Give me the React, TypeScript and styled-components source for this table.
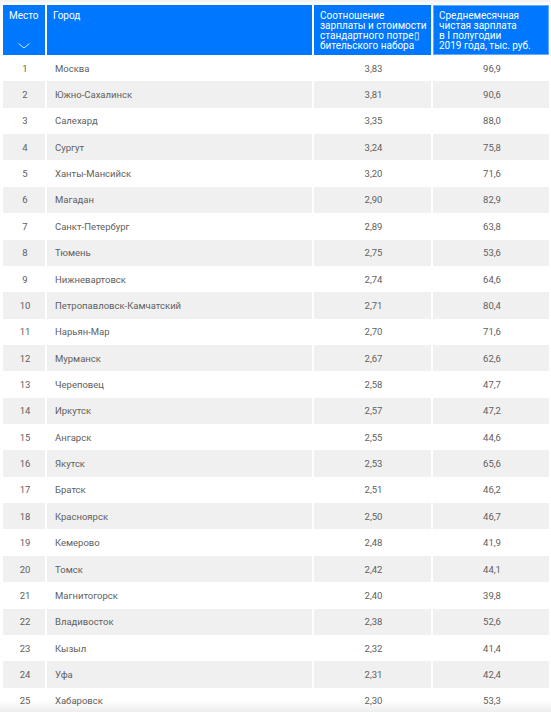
import styled, { createGlobalStyle } from 'styled-components';

const GlobalStyle = createGlobalStyle`
  html, body {
    margin: 0;
    padding: 0;
    background: #fff;
    overflow: hidden;
  }
  body {
    font-family: Roboto, "Open Sans", "Liberation Sans", sans-serif;
  }
`;

const Frame = styled.div`
  position: relative;
  width: 551px;
  height: 712px;
  overflow: hidden;
  padding: 5px 0 0 1px;
  box-sizing: border-box;
`;

const Shade = styled.div<{ $edge: 'top' | 'bottom' }>`
  position: absolute;
  left: 0;
  right: 0;
  ${({ $edge }) => ($edge === 'top' ? 'top: 0; height: 5px;' : 'bottom: 0; height: 12px;')}
  background: ${({ $edge }) =>
    $edge === 'top'
      ? 'linear-gradient(to bottom, rgba(0,0,0,0.06), rgba(0,0,0,0))'
      : 'linear-gradient(to bottom, rgba(0,0,0,0), rgba(0,0,0,0.07))'};
  pointer-events: none;
`;

const Table = styled.table`
  width: 550px;
  border-collapse: separate;
  border-spacing: 2px 0;
  table-layout: fixed;
`;

const HeadCell = styled.th<{ $active?: boolean }>`
  height: 50px;
  padding: 6px 4px 0 6px;
  box-sizing: border-box;
  background: #0077ff;
  color: #fff;
  font-size: 10px;
  font-weight: 400;
  line-height: 10px;
  text-align: left;
  vertical-align: top;
  white-space: nowrap;
  overflow: hidden;
  position: relative;
  ${({ $active }) => ($active ? 'box-shadow: inset 0 0 0 1px rgba(160, 205, 255, 0.6);' : '')}
`;

const Chevron = styled.svg`
  position: absolute;
  left: 50%;
  bottom: 6px;
  margin-left: -6px;
`;

const Row = styled.tr<{ $shaded: boolean }>`
  td {
    background: ${({ $shaded }) => ($shaded ? '#f0f0f0' : '#fff')};
  }
`;

const Cell = styled.td<{ $align?: 'left' | 'center' }>`
  height: 26.36px;
  padding: 0 6px 0 8px;
  box-sizing: border-box;
  color: #606060;
  font-size: 9.5px;
  text-align: ${({ $align }) => $align || 'center'};
  vertical-align: middle;
  white-space: nowrap;
`;

const rows: [string, string, string][] = [
  ['Москва', '3,83', '96,9'],
  ['Южно-Сахалинск', '3,81', '90,6'],
  ['Салехард', '3,35', '88,0'],
  ['Сургут', '3,24', '75,8'],
  ['Ханты-Мансийск', '3,20', '71,6'],
  ['Магадан', '2,90', '82,9'],
  ['Санкт-Петербург', '2,89', '63,8'],
  ['Тюмень', '2,75', '53,6'],
  ['Нижневартовск', '2,74', '64,6'],
  ['Петропавловск-Камчатский', '2,71', '80,4'],
  ['Нарьян-Мар', '2,70', '71,6'],
  ['Мурманск', '2,67', '62,6'],
  ['Череповец', '2,58', '47,7'],
  ['Иркутск', '2,57', '47,2'],
  ['Ангарск', '2,55', '44,6'],
  ['Якутск', '2,53', '65,6'],
  ['Братск', '2,51', '46,2'],
  ['Красноярск', '2,50', '46,7'],
  ['Кемерово', '2,48', '41,9'],
  ['Томск', '2,42', '44,1'],
  ['Магнитогорск', '2,40', '39,8'],
  ['Владивосток', '2,38', '52,6'],
  ['Кызыл', '2,32', '41,4'],
  ['Уфа', '2,31', '42,4'],
  ['Хабаровск', '2,30', '53,3'],
];

export default function App() {
  return (
    <Frame>
      <GlobalStyle />
      <Table>
        <colgroup>
          <col style={{ width: 42 }} />
          <col style={{ width: 265 }} />
          <col style={{ width: 117 }} />
          <col style={{ width: 116 }} />
        </colgroup>
        <thead>
          <tr>
            <HeadCell>
              Место
              <Chevron width="12" height="6" viewBox="0 0 12 6">
                <path d="M0.5 0.5 L6 5 L11.5 0.5" fill="none" stroke="#cfe3ff" strokeWidth="1" />
              </Chevron>
            </HeadCell>
            <HeadCell>Город</HeadCell>
            <HeadCell>
              Соотношение
              <br />
              зарплаты и стоимости
              <br />
              стандартного потре▯
              <br />
              бительского набора
            </HeadCell>
            <HeadCell $active>
              Среднемесячная
              <br />
              чистая зарплата
              <br />
              в I полугодии
              <br />
              2019 года, тыс. руб.
            </HeadCell>
          </tr>
        </thead>
        <tbody>
          {rows.map(([city, ratio, salary], i) => (
            <Row key={city} $shaded={i % 2 === 1}>
              <Cell>{i + 1}</Cell>
              <Cell $align="left">{city}</Cell>
              <Cell>{ratio}</Cell>
              <Cell>{salary}</Cell>
            </Row>
          ))}
        </tbody>
      </Table>
      <Shade $edge="top" />
      <Shade $edge="bottom" />
    </Frame>
  );
}
